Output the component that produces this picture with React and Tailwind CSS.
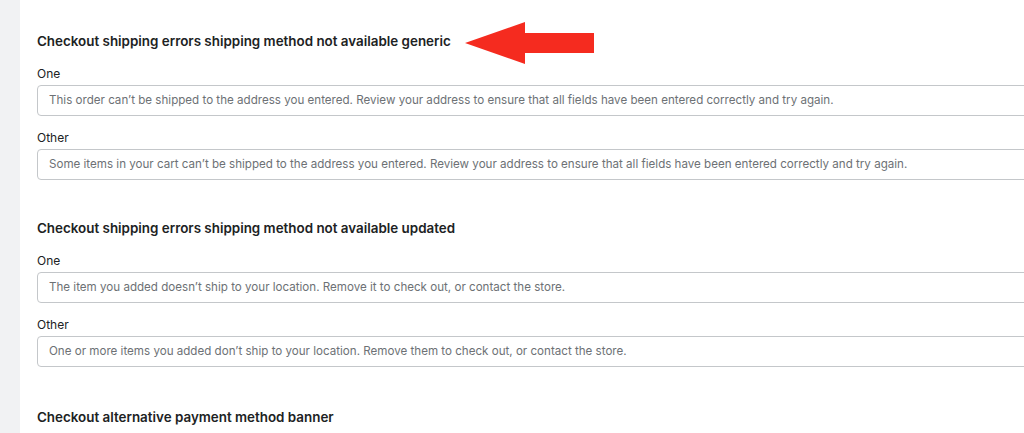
import React from 'react';

const sections = [
  {
    title: 'Checkout shipping errors shipping method not available generic',
    fields: [
      {
        label: 'One',
        value:
          'This order can’t be shipped to the address you entered. Review your address to ensure that all fields have been entered correctly and try again.',
      },
      {
        label: 'Other',
        value:
          'Some items in your cart can’t be shipped to the address you entered. Review your address to ensure that all fields have been entered correctly and try again.',
      },
    ],
  },
  {
    title: 'Checkout shipping errors shipping method not available updated',
    fields: [
      {
        label: 'One',
        value: 'The item you added doesn’t ship to your location. Remove it to check out, or contact the store.',
      },
      {
        label: 'Other',
        value: 'One or more items you added don’t ship to your location. Remove them to check out, or contact the store.',
      },
    ],
  },
  {
    title: 'Checkout alternative payment method banner',
    fields: [],
  },
];

function Arrow() {
  return (
    <svg className="absolute left-[464px] top-[22px]" width="132" height="42" viewBox="0 0 132 42">
      <polygon points="1,21 61,0 61,11 130,11 130,31 61,31 61,42" fill="#f52b1f" />
    </svg>
  );
}

function Field({ label, value }) {
  return (
    <div>
      <div className="h-5 leading-[22px] text-[12px] text-[#202223]">{label}</div>
      <div className="mt-[2px] h-[31px] w-[1020px] border border-[#c4c7ca] rounded-[4px] pl-[11px] flex items-center text-[11.6px] text-[#6d7175] whitespace-nowrap">
        {value}
      </div>
    </div>
  );
}

export default function App() {
  return (
    <div
      className="relative flex h-[433px] w-[1024px] overflow-hidden bg-white"
      style={{ fontFamily: 'Inter, "Noto Sans", sans-serif' }}
    >
      <div className="w-5 shrink-0 bg-[#f1f2f3]" />
      <div className="flex-1 pl-[17px] pt-[31px] flex flex-col gap-[38px]">
        {sections.map((s) => (
          <div key={s.title} className={s.fields.length ? '' : 'pt-[2px]'}>
            <h2 className="h-5 leading-5 text-[13.4px] font-semibold text-[#202223]">{s.title}</h2>
            <div className="mt-3 flex flex-col gap-[11px]">
              {s.fields.map((f) => (
                <Field key={f.label} {...f} />
              ))}
            </div>
          </div>
        ))}
      </div>
      <Arrow />
    </div>
  );
}
